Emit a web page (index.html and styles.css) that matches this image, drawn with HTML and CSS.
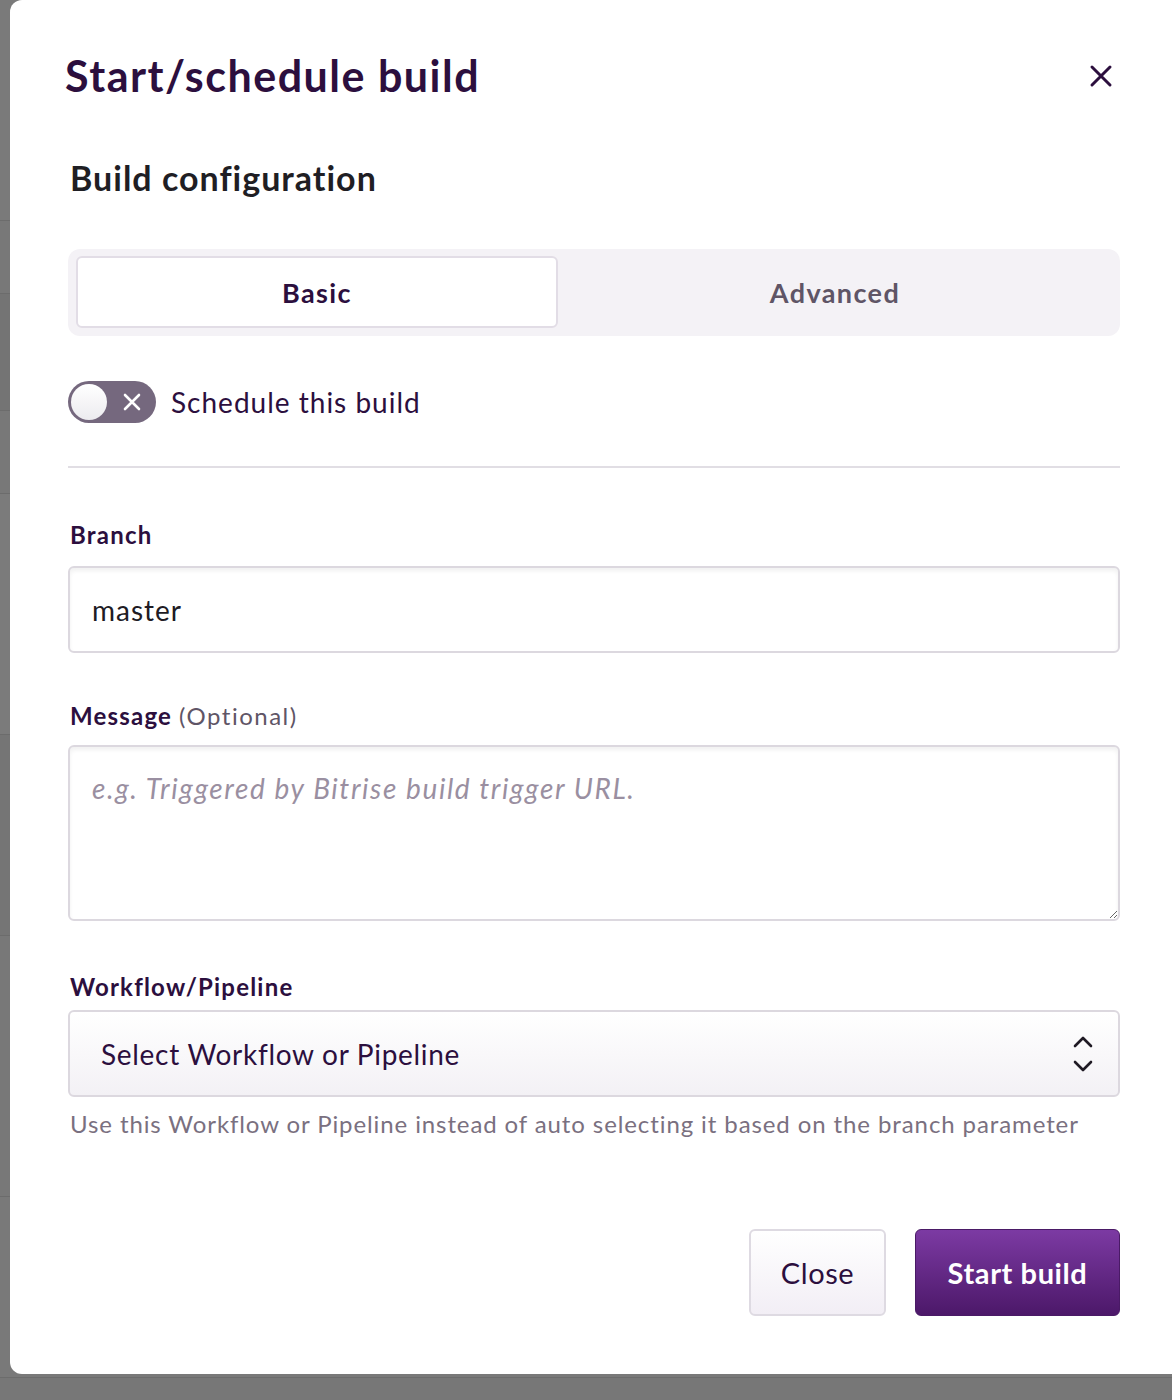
FILE: index.html
```html
<!DOCTYPE html>
<html>
<head>
<meta charset="utf-8">
<link rel="stylesheet" href="styles.css">
</head>
<body>
<div class="backdrop">
	<div class="row r1"></div>
	<div class="row r2"></div>
	<div class="row r3"></div>
	<div class="row r4"></div>
	<div class="row r5"></div>
	<div class="row r6"></div>
	<div class="row r7"></div>
	<div class="row r8"></div>
	<div class="row r9"></div>
</div>

<div class="modal">
	<div class="modal-head">
		<h1>Start/schedule build</h1>
		<button class="close-x" aria-label="Close">
			<svg width="24" height="24" viewBox="0 0 24 24"><path d="M3 3 L21 21 M21 3 L3 21" stroke="#2c0f3e" stroke-width="3" stroke-linecap="round"/></svg>
		</button>
	</div>

	<h2>Build configuration</h2>

	<div class="tabs">
		<div class="tab active">Basic</div>
		<div class="tab">Advanced</div>
	</div>

	<label class="toggle-row">
		<span class="toggle">
			<span class="knob"></span>
			<svg width="20" height="20" viewBox="0 0 20 20"><path d="M3 3 L17 17 M17 3 L3 17" stroke="#fff" stroke-width="2.6" stroke-linecap="round"/></svg>
		</span>
		<span>Schedule this build</span>
	</label>

	<hr class="divider">

	<div class="field">
		<div class="label">Branch</div>
		<input class="input" type="text" value="master">
	</div>

	<div class="field">
		<div class="label">Message <span class="opt">(Optional)</span></div>
		<textarea class="input area" placeholder="e.g. Triggered by Bitrise build trigger URL."></textarea>
	</div>

	<div class="field workflow">
		<div class="label">Workflow/Pipeline</div>
		<div class="select">
			<span>Select Workflow or Pipeline</span>
			<svg width="22" height="36" viewBox="0 0 22 36"><path d="M3 10 L11 2 L19 10 M3 26 L11 34 L19 26" fill="none" stroke="#1f1a24" stroke-width="2.6" stroke-linecap="round" stroke-linejoin="round"/></svg>
		</div>
		<div class="help">Use this Workflow or Pipeline instead of auto selecting it based on the branch parameter</div>
	</div>

	<div class="actions">
		<button class="btn secondary">Close</button>
		<button class="btn primary">Start build</button>
	</div>
</div>
</body>
</html>
```

FILE: styles.css
```css
html, body
{
	margin: 0;
	padding: 0;
}
body
{
	width: 1172px;
	height: 1400px;
	overflow: hidden;
	background: #767676;
	font-family: Lato, "Open Sans", sans-serif;
}

/* page behind the modal */
.backdrop
{
	display: flex;
	flex-direction: column;
}
.row
{
	border-bottom: 1px solid #6c6c6c;
	background: #787878;
}
.r1 { height: 220px; background: #7a7a7a; }
.r2 { height: 72px; }
.r3 { height: 116px; background: #747474; }
.r4 { height: 82px; }
.r5 { height: 240px; background: #7b7b7b; }
.r6 { height: 200px; background: #757575; }
.r7 { height: 260px; }
.r8 { height: 180px; background: #797979; }
.r9 { height: 30px; background: #777; border-bottom-color: #8a8a8a; }

.modal
{
	position: fixed;
	left: 10px;
	top: 0;
	width: 1180px;
	height: 1374px;
	box-sizing: border-box;
	padding: 48px 70px 0 58px;
	background: #fff;
	border-radius: 12px;
	color: #2c0f3e;
}

.modal-head
{
	display: flex;
	align-items: center;
	justify-content: space-between;
	height: 56px;
}
h1
{
	margin: 0 0 0 -3px;
	font-size: 43px;
	font-weight: 700;
	line-height: 56px;
	letter-spacing: 1.5px;
	color: #2c0f3e;
}
.close-x
{
	border: 0;
	background: none;
	padding: 0;
	margin-right: 7px;
	display: flex;
}

h2
{
	margin: 54px 0 0 2px;
	font-size: 34px;
	font-weight: 700;
	line-height: 40px;
	letter-spacing: 1px;
	color: #1f1e24;
}

.tabs
{
	display: grid;
	grid-template-columns: 482px 1fr;
	margin-top: 51px;
	height: 87px;
	box-sizing: border-box;
	padding: 7px 8px 8px;
	background: #f4f2f6;
	border-radius: 12px;
}
.tab
{
	display: flex;
	align-items: center;
	justify-content: center;
	font-size: 27px;
	font-weight: 700;
	letter-spacing: 1.4px;
	color: #5f5566;
}
.tab.active
{
	background: #fff;
	border: 2px solid #e2dde6;
	border-radius: 6px;
	color: #2c0f3e;
}

.toggle-row
{
	display: flex;
	align-items: center;
	gap: 15px;
	margin-top: 45px;
	font-size: 28px;
	letter-spacing: 1px;
	color: #2c0f3e;
}
.toggle
{
	display: flex;
	align-items: center;
	justify-content: flex-end;
	width: 88px;
	height: 42px;
	box-sizing: border-box;
	padding: 0 14px 0 3px;
	background: #75687e;
	border-radius: 21px;
	position: relative;
}
.knob
{
	position: absolute;
	left: 3px;
	top: 3px;
	width: 36px;
	height: 36px;
	border-radius: 50%;
	background: linear-gradient(#fff, #ecebef);
}

.divider
{
	border: 0;
	border-top: 2px solid #e1dee4;
	margin: 43px 0 0;
}

.field
{
	margin-top: 52px;
}
.field + .field
{
	margin-top: 48px;
}
.field.workflow
{
	margin-top: 51px;
}
.label
{
	margin-left: 2px;
	font-size: 24px;
	font-weight: 700;
	line-height: 30px;
	letter-spacing: 1.2px;
	color: #2c0f3e;
}
.opt
{
	font-weight: 400;
	letter-spacing: 1.5px;
	color: #5f5566;
}

.input
{
	display: block;
	width: 100%;
	height: 87px;
	box-sizing: border-box;
	margin-top: 16px;
	padding: 0 22px;
	border: 2px solid #dcd8df;
	border-radius: 6px;
	box-shadow: inset 0 3px 4px rgba(0, 0, 0, 0.06);
	font-family: inherit;
	font-size: 28px;
	letter-spacing: 1px;
	color: #201b24;
	outline: none;
}
.area
{
	height: 176px;
	margin-top: 14px;
	padding: 24px 22px;
	resize: vertical;
	letter-spacing: 1.6px;
}
.area::placeholder
{
	font-style: italic;
	color: #9a8fa1;
}

.select
{
	display: flex;
	align-items: center;
	justify-content: space-between;
	height: 87px;
	box-sizing: border-box;
	margin-top: 8px;
	padding: 0 24px 0 31px;
	border: 2px solid #dcd8df;
	border-radius: 6px;
	background: linear-gradient(#fff, #f3f1f5);
	font-size: 28px;
	letter-spacing: 0.7px;
	color: #2c0f3e;
}
.help
{
	margin: 12px 0 0 2px;
	font-size: 24px;
	line-height: 30px;
	letter-spacing: 0.9px;
	color: #7a7080;
}

.actions
{
	display: flex;
	justify-content: flex-end;
	gap: 29px;
	margin-top: 90px;
}
.btn
{
	height: 87px;
	border-radius: 6px;
	font-family: inherit;
	font-size: 29px;
	letter-spacing: 0.6px;
}
.secondary
{
	width: 137px;
	border: 2px solid #dedae2;
	background: linear-gradient(#fff, #f2eef5);
	color: #2c0f3e;
}
.primary
{
	width: 205px;
	border: 1px solid #4a1a66;
	background: linear-gradient(#7c3aa3, #4c1869);
	color: #fff;
	font-weight: 700;
}
```
